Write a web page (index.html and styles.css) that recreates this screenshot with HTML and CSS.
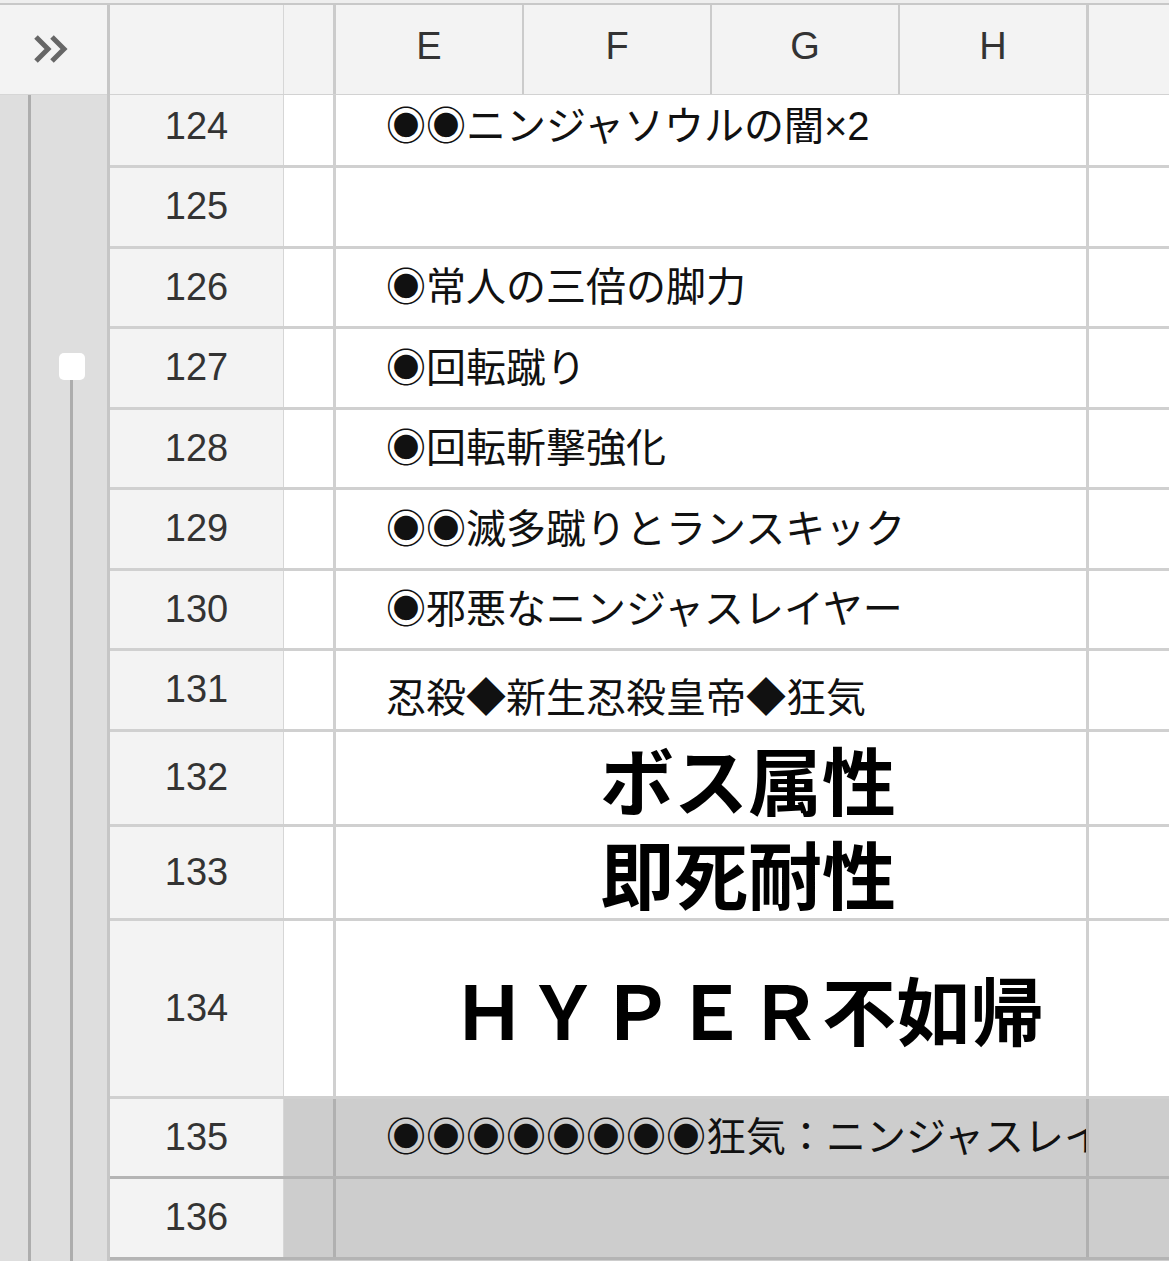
FILE: index.html
```html
<!DOCTYPE html>
<html lang="ja">
<head>
  <meta charset="UTF-8">
  <meta name="viewport" content="width=device-width, initial-scale=1.0">
  <title>Sheet</title>
  <link rel="stylesheet" href="styles.css">
</head>
<body>

<div class="sheet">

  <!-- Left side: corner button and row group gutter -->
  <div class="side">
    <div class="corner">
      <svg width="40" height="36" viewBox="0 0 40 36">
        <polyline points="5,5 17,17 5,29" fill="none" stroke="#666" stroke-width="5"/>
        <polyline points="21,5 33,17 21,29" fill="none" stroke="#666" stroke-width="5"/>
      </svg>
    </div>
    <div class="gutter">
      <div class="gutter-line"></div>
      <div class="track">
        <div class="handle"></div>
        <div class="track-line"></div>
      </div>
    </div>
  </div>

  <!-- Grid -->
  <div class="main">
    <div class="colheads">
      <div class="ch ch-num"></div>
      <div class="ch ch-d"></div>
      <div class="ch ch-col">E</div>
      <div class="ch ch-col">F</div>
      <div class="ch ch-col">G</div>
      <div class="ch ch-col ch-last">H</div>
      <div class="ch ch-rest"></div>
    </div>

    <div class="row first">
      <div class="num">124</div><div class="d"></div>
      <div class="cell">◉◉ニンジャソウルの闇×2</div><div class="rest"></div>
    </div>
    <div class="row">
      <div class="num">125</div><div class="d"></div>
      <div class="cell"></div><div class="rest"></div>
    </div>
    <div class="row">
      <div class="num">126</div><div class="d"></div>
      <div class="cell">◉常人の三倍の脚力</div><div class="rest"></div>
    </div>
    <div class="row">
      <div class="num">127</div><div class="d"></div>
      <div class="cell">◉回転蹴り</div><div class="rest"></div>
    </div>
    <div class="row">
      <div class="num">128</div><div class="d"></div>
      <div class="cell">◉回転斬撃強化</div><div class="rest"></div>
    </div>
    <div class="row">
      <div class="num">129</div><div class="d"></div>
      <div class="cell">◉◉滅多蹴りとランスキック</div><div class="rest"></div>
    </div>
    <div class="row">
      <div class="num">130</div><div class="d"></div>
      <div class="cell">◉邪悪なニンジャスレイヤー</div><div class="rest"></div>
    </div>
    <div class="row">
      <div class="num">131</div><div class="d"></div>
      <div class="cell bottom">忍殺◆新生忍殺皇帝◆狂気</div><div class="rest"></div>
    </div>
    <div class="row tall">
      <div class="num">132</div><div class="d"></div>
      <div class="cell big">ボス属性</div><div class="rest"></div>
    </div>
    <div class="row tall2">
      <div class="num">133</div><div class="d"></div>
      <div class="cell big">即死耐性</div><div class="rest"></div>
    </div>
    <div class="row huge">
      <div class="num">134</div><div class="d"></div>
      <div class="cell big">ＨＹＰＥＲ不如帰</div><div class="rest"></div>
    </div>
    <div class="row shaded">
      <div class="num">135</div><div class="d"></div>
      <div class="cell">◉◉◉◉◉◉◉◉狂気：ニンジャスレイヤーの力</div><div class="rest"></div>
    </div>
    <div class="row shaded last">
      <div class="num">136</div><div class="d"></div>
      <div class="cell"></div><div class="rest"></div>
    </div>
  </div>

</div>

</body>
</html>
```

FILE: styles.css
```css
body {
  margin: 0;
  background-color: #eeeeee;
  font-family: "Liberation Sans", Arial, sans-serif;
  color: #333;
  height: 1261px;
  overflow: hidden;
}

.sheet {
  display: flex;
  margin-top: 3px;
  border-top: 2px solid #c8c8c8;
  height: 1256px;
}

/* Left side */
.side {
  width: 107px;
  border-right: 3px solid #c6c6c6;
  display: flex;
  flex-direction: column;
  flex-shrink: 0;
}

.corner {
  height: 89px;
  border-bottom: 1px solid #d6d6d6;
  background-color: #f3f3f3;
  display: flex;
  align-items: center;
  padding-left: 31px;
}

.gutter {
  flex: 1;
  background-color: #dedede;
  display: flex;
}

.gutter-line {
  margin-left: 28px;
  width: 3px;
  background-color: #adadad;
}

.track {
  display: flex;
  flex-direction: column;
}

.handle {
  margin-top: 258px;
  margin-left: 28px;
  width: 26px;
  height: 27px;
  border-radius: 5px;
  background-color: #fff;
}

.track-line {
  flex: 1;
  margin-left: 39px;
  width: 3px;
  background-color: #adadad;
}

/* Grid */
.main {
  flex: 1;
  display: flex;
  flex-direction: column;
  background-color: #cdcdcd;
}

.colheads {
  display: flex;
  height: 90px;
  border-bottom: 1px solid #d2d2d2;
  background-color: #f3f3f3;
  box-sizing: border-box;
  flex-shrink: 0;
}

.ch {
  display: flex;
  align-items: center;
  justify-content: center;
  font-size: 38px;
  color: #333;
  padding-bottom: 6px;
}

.ch-num {
  width: 173px;
  border-right: 1px solid #d6d6d6;
}

.ch-d {
  width: 49px;
  border-right: 3px solid #cbcbcb;
}

.ch-col {
  width: 186px;
  border-right: 2px solid #cbcbcb;
}

.ch-col.ch-last {
  border-right-width: 3px;
}

.ch-rest {
  flex: 1;
}

.row {
  display: flex;
  height: 80.5px;
  box-sizing: border-box;
  border-bottom: 3px solid #d0d0d0;
  background-color: #fff;
  flex-shrink: 0;
}

/* first row is partly scrolled out of view */
.row.first { height: 73px; }
.row.first .num,
.row.first .cell {
  padding-bottom: 8px;
}

.row.tall { height: 95px; }
.row.tall2 { height: 94px; }
.row.huge { height: 178px; }

.num {
  width: 173px;
  border-right: 1px solid #d6d6d6;
  background-color: #f3f3f3;
  display: flex;
  align-items: center;
  justify-content: center;
  font-size: 38px;
  color: #333;
  flex-shrink: 0;
}

.d {
  width: 49px;
  border-right: 3px solid #d0d0d0;
  flex-shrink: 0;
}

.cell {
  width: 700px;
  padding-left: 50px;
  border-right: 3px solid #d0d0d0;
  display: flex;
  align-items: center;
  font-family: "Liberation Sans", "Noto Sans CJK JP", sans-serif;
  font-size: 40px;
  line-height: 1.1;
  color: #111;
  white-space: nowrap;
  overflow: hidden;
  flex-shrink: 0;
}

.cell.bottom {
  align-items: flex-end;
  padding-bottom: 9px;
}

.cell.big {
  justify-content: center;
  padding-left: 74px;
  width: 676px;
  overflow: visible;
  font-family: "Noto Sans CJK JP", sans-serif;
  font-weight: bold;
  font-size: 74px;
  line-height: 1;
  color: #000;
}

.rest {
  flex: 1;
}

/* Hidden / grouped rows */
.row.shaded {
  border-bottom-color: #b4b4b4;
  background-color: #cdcdcd;
}

.row.shaded .d,
.row.shaded .cell {
  border-right-color: #b0b0b0;
}
```
